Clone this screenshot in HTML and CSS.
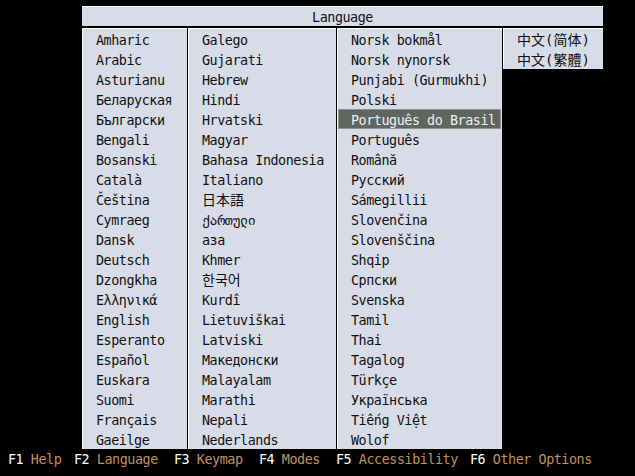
FILE: index.html
```html
<!DOCTYPE html>
<html lang="en">
<head>
    <meta charset="UTF-8">
    <meta name="viewport" content="width=device-width, initial-scale=1.0">
    <title>Language</title>
    <link rel="stylesheet" href="styles.css">
</head>
<body>
    <div class="screen">
        <div class="menu">
            <div class="menu-title">Language</div>
            <div class="menu-body">
                <ul class="col col-1">
                    <li>Amharic</li>
                    <li>Arabic</li>
                    <li>Asturianu</li>
                    <li>Беларуская</li>
                    <li>Български</li>
                    <li>Bengali</li>
                    <li>Bosanski</li>
                    <li>Català</li>
                    <li>Čeština</li>
                    <li>Cymraeg</li>
                    <li>Dansk</li>
                    <li>Deutsch</li>
                    <li>Dzongkha</li>
                    <li>Ελληνικά</li>
                    <li>English</li>
                    <li>Esperanto</li>
                    <li>Español</li>
                    <li>Euskara</li>
                    <li>Suomi</li>
                    <li>Français</li>
                    <li>Gaeilge</li>
                </ul>
                <ul class="col col-2">
                    <li>Galego</li>
                    <li>Gujarati</li>
                    <li>Hebrew</li>
                    <li>Hindi</li>
                    <li>Hrvatski</li>
                    <li>Magyar</li>
                    <li>Bahasa Indonesia</li>
                    <li>Italiano</li>
                    <li class="cjk" lang="ja">日本語</li>
                    <li>ქართული</li>
                    <li>аза</li>
                    <li>Khmer</li>
                    <li class="cjk" lang="ko">한국어</li>
                    <li>Kurdî</li>
                    <li>Lietuviškai</li>
                    <li>Latviski</li>
                    <li>Македонски</li>
                    <li>Malayalam</li>
                    <li>Marathi</li>
                    <li>Nepali</li>
                    <li>Nederlands</li>
                </ul>
                <ul class="col col-3">
                    <li>Norsk bokmål</li>
                    <li>Norsk nynorsk</li>
                    <li>Punjabi (Gurmukhi)</li>
                    <li>Polski</li>
                    <li class="selected">Português do Brasil</li>
                    <li>Português</li>
                    <li>Română</li>
                    <li>Русский</li>
                    <li>Sámegillii</li>
                    <li>Slovenčina</li>
                    <li>Slovenščina</li>
                    <li>Shqip</li>
                    <li>Српски</li>
                    <li>Svenska</li>
                    <li>Tamil</li>
                    <li>Thai</li>
                    <li>Tagalog</li>
                    <li>Türkçe</li>
                    <li>Українська</li>
                    <li>Tiếng Việt</li>
                    <li>Wolof</li>
                </ul>
                <ul class="col col-4">
                    <li class="cjk" lang="zh-CN">中文(简体)</li>
                    <li class="cjk" lang="zh-TW">中文(繁體)</li>
                </ul>
            </div>
        </div>

        <!-- barre des touches de fonction -->
        <div class="keys">
            <span class="key k1"><b>F1</b> Help</span>
            <span class="key k2"><b>F2</b> Language</span>
            <span class="key k3"><b>F3</b> Keymap</span>
            <span class="key k4"><b>F4</b> Modes</span>
            <span class="key k5"><b>F5</b> Accessibility</span>
            <span class="key k6"><b>F6</b> Other Options</span>
        </div>
    </div>
</body>
</html>
```

FILE: styles.css
```css
body {
    margin: 0;
    padding: 0;
    background-color: #000;
    font-family: "DejaVu Sans Mono", "Liberation Mono", monospace;
    font-size: 13.4px;
    letter-spacing: -0.45px;
    color: #111;
}

.screen {
    width: 635px;
    height: 476px;
    padding-top: 6px;
    box-sizing: border-box;
}

.menu {
    margin-left: 82px;
    width: 521px;
}

.menu-title {
    height: 19px;
    line-height: 22px;
    border-top: 1px solid #fff;
    border-bottom: 2px solid #000;
    background-color: #d8dce8;
    text-align: center;
}

.menu-body {
    display: flex;
    align-items: flex-start;
    gap: 1px;
}

.col {
    list-style: none;
    margin: 0;
    padding: 0 0 0 13px;
    border-top: 1px solid #fff;
    border-left: 1px solid #fff;
    background-color: #d8dce8;
    box-sizing: border-box;
}

.col li {
    height: 20px;
    line-height: 23px;
    white-space: nowrap;
}

.col-1 {
    width: 105px;
    height: 421px;
}

.col-2 {
    width: 148px;
    height: 421px;
}

.col-3 {
    width: 165px;
    height: 421px;
}

.col-4 {
    width: 100px;
    height: 41px;
}

.col li.cjk {
    font-family: "DejaVu Sans Mono", "Noto Sans CJK SC", monospace;
    font-size: 14px;
    letter-spacing: 0;
}

.col li.cjk[lang="ja"] {
    font-family: "DejaVu Sans Mono", "Noto Sans CJK JP", monospace;
}

.col li.cjk[lang="ko"] {
    font-family: "DejaVu Sans Mono", "Noto Sans CJK KR", monospace;
}

.col li.cjk[lang="zh-TW"] {
    font-family: "DejaVu Sans Mono", "Noto Sans CJK TC", monospace;
}

.col li.selected {
    margin-left: -13px;
    margin-right: 1px;
    padding-left: 12px;
    height: 18px;
    line-height: 21px;
    border: 1px solid #8c928c;
    background-color: #5f665f;
    color: #eef0ee;
}

.keys {
    display: flex;
    padding-left: 8px;
    margin-top: 1px;
    height: 20px;
    line-height: 20px;
    color: #c0905f;
    white-space: nowrap;
}

.keys b {
    font-weight: normal;
    color: #fff;
}

.k1 { width: 66px; }
.k2 { width: 100px; }
.k3 { width: 85px; }
.k4 { width: 77px; }
.k5 { width: 134px; }
```
